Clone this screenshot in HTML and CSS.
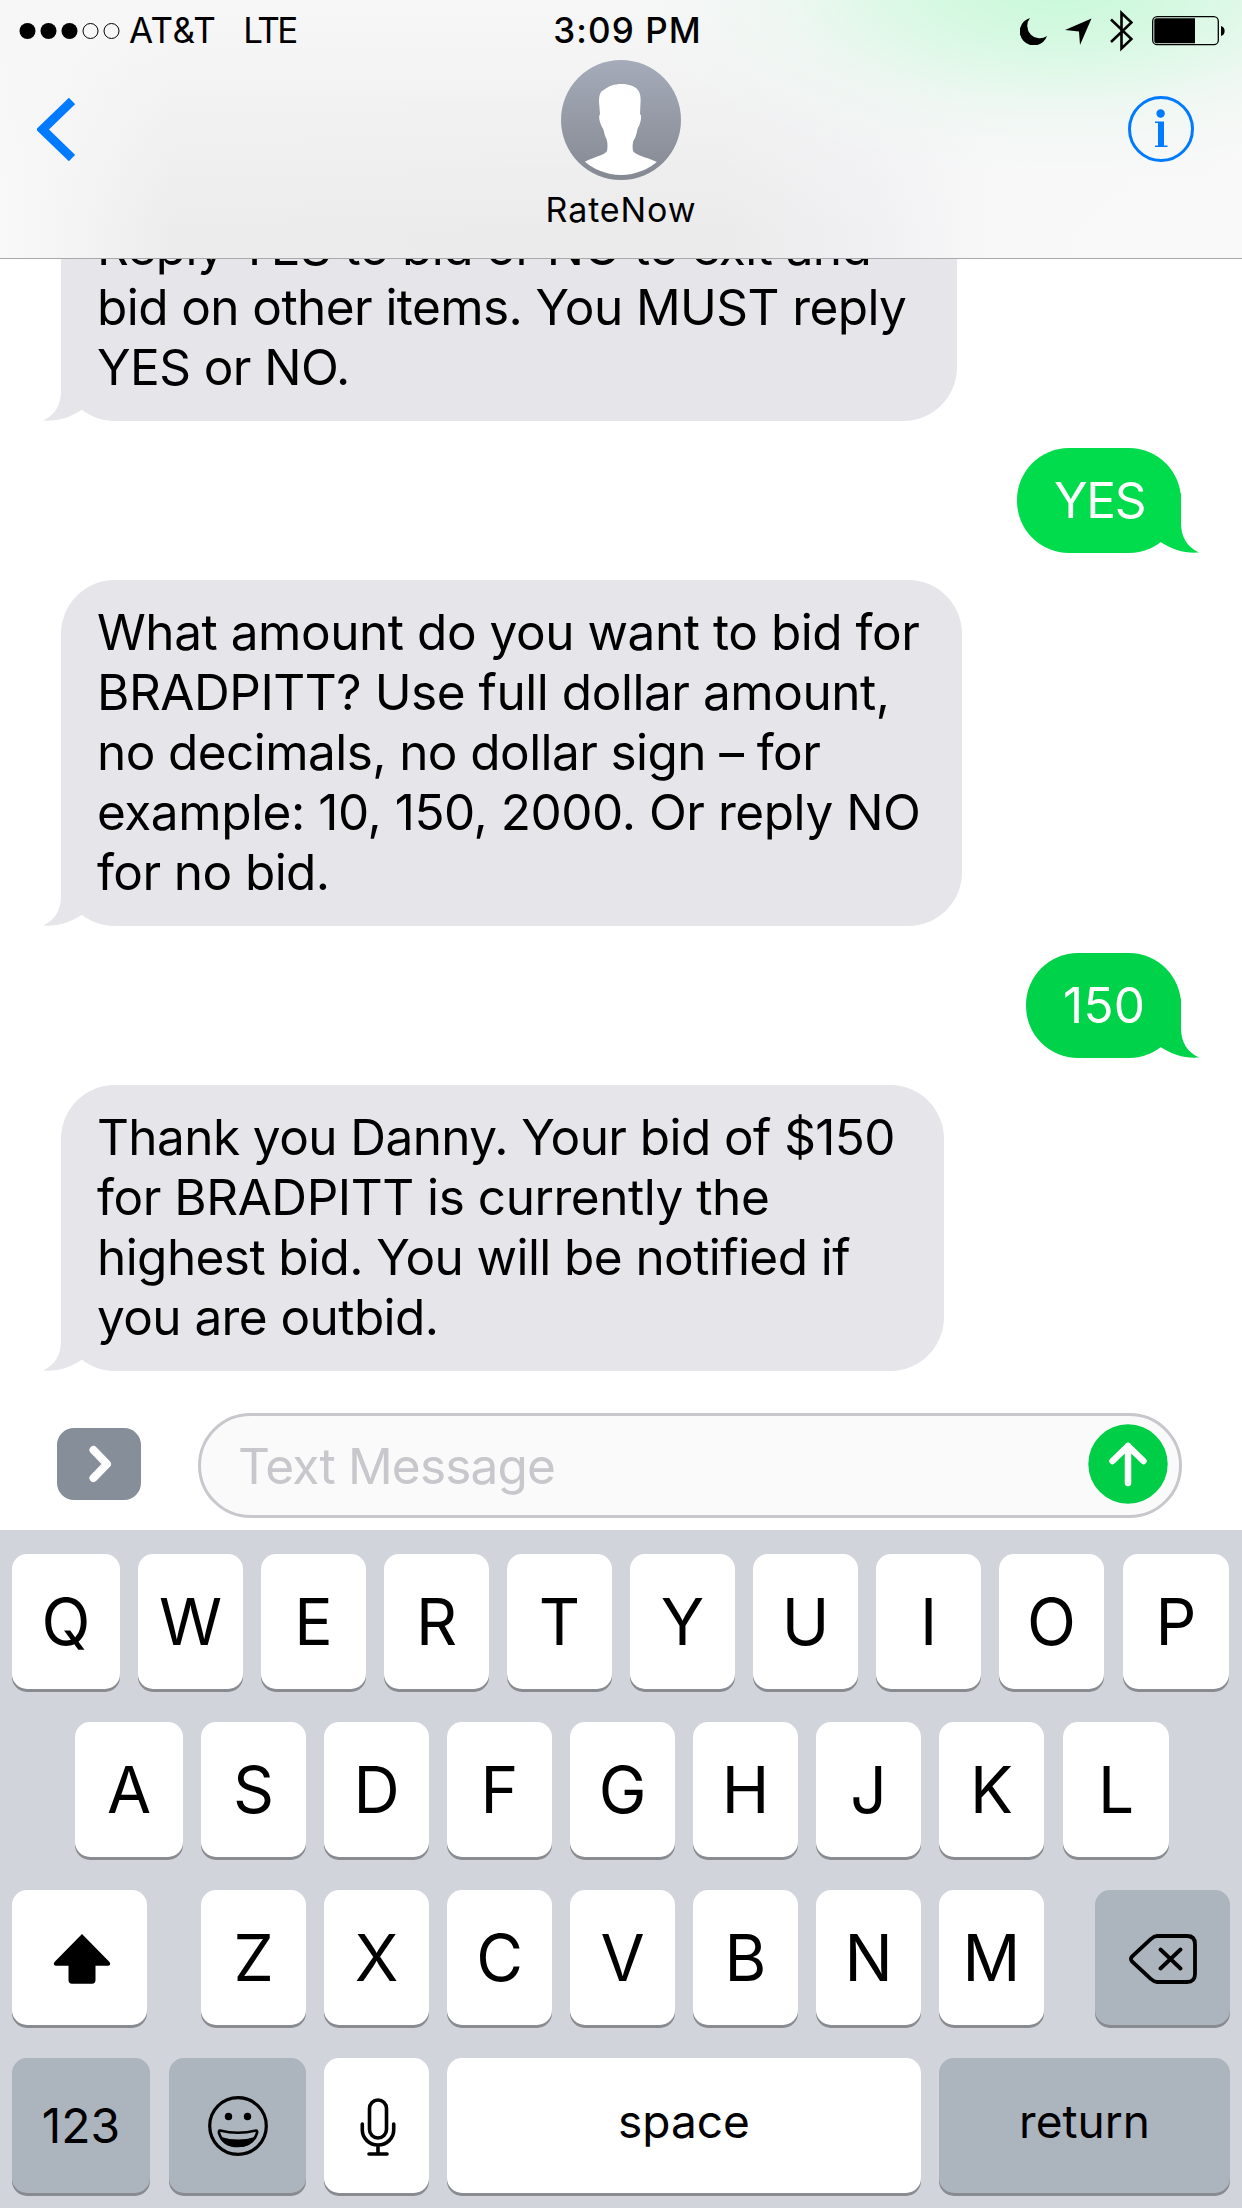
FILE: index.html
```html
<!DOCTYPE html>
<html lang="en">
<head>
<title>RateNow</title>
<meta charset="utf-8">
<meta name="viewport" content="width=device-width, initial-scale=1">
<link rel="stylesheet" href="styles.css">
</head>
<body>

<header>
  <div class="status">
    <div class="status-left">
      <svg class="signal" width="102" height="18" viewBox="0 0 102 18">
        <circle cx="8.5" cy="9" r="8"/><circle cx="29.5" cy="9" r="8"/><circle cx="50.5" cy="9" r="8"/>
        <circle class="empty" cx="71.5" cy="9" r="7.5"/><circle class="empty" cx="92.5" cy="9" r="7.5"/>
      </svg>
      <span class="carrier">AT&amp;T</span>
      <span class="network">LTE</span>
    </div>
    <div class="time">3:09 PM</div>
    <div class="status-right">
      <!-- do not disturb, location, bluetooth, battery -->
      <svg width="27" height="27" viewBox="0 0 27 27"><path d="M10 0A14 14 0 1 0 27 18A12.5 12.5 0 0 1 10 0Z"/></svg>
      <svg class="loc" width="27" height="27" viewBox="0 0 27 27"><path d="M26.500.5L15 27L14 13.500L0 12Z"/></svg>
      <svg class="bt" width="23" height="42" viewBox="0 0 23 42"><path d="M1 9.500L21.500 29L11.500 38.500V3L21.500 12.500L1 32" fill="none" stroke="#000" stroke-width="2.600"/></svg>
      <svg class="battery" width="74" height="30" viewBox="0 0 74 30">
        <rect x=".7" y=".7" width="65.600" height="28" rx="4.500" fill="none" stroke="#000" stroke-width="1.300"/>
        <path d="M5 2.300H43V27.200H5A2.500 2.500 0 0 1 2.300 24.500V5A2.500 2.500 0 0 1 5 2.300Z"/>
        <path d="M69 10A5 5.200 0 0 1 69 20Z"/>
      </svg>
    </div>
  </div>
  <nav>
    <svg class="back" width="38" height="63" viewBox="0 0 38 63"><path d="M35 3L5.500 31.500L35 60" fill="none" stroke="#007aff" stroke-width="9"/></svg>
    <div class="contact">
      <svg width="120" height="120" viewBox="0 0 120 120">
        <defs>
          <linearGradient id="gray" x1="0" y1="0" x2="0" y2="1">
            <stop offset="0" stop-color="#a5abb9"/>
            <stop offset="1" stop-color="#858992"/>
          </linearGradient>
          <clipPath id="round"><circle cx="60" cy="60" r="55"/></clipPath>
        </defs>
        <circle cx="60" cy="60" r="60" fill="url(#gray)"/>
        <path clip-path="url(#round)" fill="#fff" d="M60 24C67 24 72 26 75 28C79 31 80 36 79.500 43L79 54C81 55 80 62 77.500 67C76.500 67 76 74 74 78C72 80 71 86 72 91C75 96 90 98 100 104V120H20V104C30 97 43 96 46 91C47 86 46.500 81 45 78C43 74 43 69 41 67C39 63 37 57 39 54L38 42C38 36 39 31 43 30C47 26 54 24 60 24Z"/>
      </svg>
      <div class="name">RateNow</div>
    </div>
    <svg class="info" width="66" height="66" viewBox="0 0 66 66">
      <circle cx="33" cy="33" r="31.500" fill="none" stroke="#007aff" stroke-width="3"/>
      <circle cx="32.600" cy="17.500" r="4.200" fill="#007aff"/>
      <path d="M27 25.500H36V49.500H39.500V51H27V49.500H30V27H27Z" fill="#007aff"/>
    </svg>
  </nav>
</header>

<main>
  <div class="bubble in">Reply YES to bid or NO to exit and<br>bid on other items. You MUST reply<br>YES or NO.
    <svg class="tail" viewBox="0 0 42 60"><path d="M18 0V30C18 44 12 54 0 59.500C14 60.500 26 57 39 48.700L42 20Z"/></svg>
  </div>
  <div class="bubble out yes">YES
    <svg class="tail" viewBox="0 0 42 60"><path d="M18 0V30C18 44 12 54 0 59.500C14 60.500 26 57 39 48.700L42 20Z"/></svg>
  </div>
  <div class="bubble in ask"><span class="loose">What amount do you want to bid for</span><br><span class="loose">BRADPITT? Use full dollar amount,</span><br>no decimals, no dollar sign – for<br><span class="loose">example: 10, 150, 2000. Or reply NO</span><br>for no bid.
    <svg class="tail" viewBox="0 0 42 60"><path d="M18 0V30C18 44 12 54 0 59.500C14 60.500 26 57 39 48.700L42 20Z"/></svg>
  </div>
  <div class="bubble out bid">150
    <svg class="tail" viewBox="0 0 42 60"><path d="M18 0V30C18 44 12 54 0 59.500C14 60.500 26 57 39 48.700L42 20Z"/></svg>
  </div>
  <div class="bubble in thanks">Thank you Danny. Your bid of $150<br><span class="loose">for BRADPITT is currently the</span><br>highest bid. You will be notified if<br>you are outbid.
    <svg class="tail" viewBox="0 0 42 60"><path d="M18 0V30C18 44 12 54 0 59.500C14 60.500 26 57 39 48.700L42 20Z"/></svg>
  </div>
</main>

<div class="compose">
  <div class="apps">
    <svg width="84" height="72" viewBox="0 0 84 72"><path d="M36.500 22L50 36L36.500 50" fill="none" stroke="#fff" stroke-width="8" stroke-linecap="round" stroke-linejoin="round"/></svg>
  </div>
  <div class="field">
    <span>Text Message</span>
    <svg class="send" width="80" height="80" viewBox="0 0 80 80">
      <circle cx="40" cy="40" r="39.700" fill="#00ce46"/>
      <path d="M40 59V22M24.500 37L40 22L55.500 37" fill="none" stroke="#fff" stroke-width="6.500" stroke-linecap="round" stroke-linejoin="round"/>
    </svg>
  </div>
</div>

<div class="keyboard">
  <div class="row">
    <div class="key wide">Q</div><div class="key">W</div><div class="key">E</div><div class="key">R</div><div class="key">T</div><div class="key">Y</div><div class="key">U</div><div class="key">I</div><div class="key">O</div><div class="key last">P</div>
  </div>
  <div class="row middle">
    <div class="key wide">A</div><div class="key">S</div><div class="key">D</div><div class="key">F</div><div class="key">G</div><div class="key">H</div><div class="key">J</div><div class="key">K</div><div class="key last">L</div>
  </div>
  <div class="row">
    <div class="key shift">
      <svg width="58" height="50" viewBox="0 0 58 50"><path d="M29 0L56.500 28Q58.500 31.500 55 31.800H42.500V46Q42.500 49.700 39 49.700H19Q15.500 49.700 15.500 46V31.800H3Q-.5 31.500 1.500 28Z"/></svg>
    </div>
    <div class="key">Z</div><div class="key">X</div><div class="key">C</div><div class="key">V</div><div class="key">B</div><div class="key">N</div><div class="key">M</div>
    <div class="key gray delete">
      <svg width="68" height="50" viewBox="0 0 68 50"><path d="M28 2H58Q66 2 66 10V40Q66 48 58 48H28Q25 48 22 45L3 27.500Q1 25 3 22.500L22 5Q25 2 28 2ZM31.500 15.500L51.500 34.500M51.500 15.500L31.500 34.500" fill="none" stroke="#000" stroke-width="3.800" stroke-linecap="round"/></svg>
    </div>
  </div>
  <div class="row">
    <div class="key gray numbers">123</div>
    <div class="key gray emoji">
      <svg width="60" height="60" viewBox="0 0 60 60">
        <circle cx="30" cy="30" r="28.300" fill="none" stroke="#000" stroke-width="3.200"/>
        <ellipse cx="20.500" cy="20.500" rx="3.700" ry="3.800"/><ellipse cx="39.500" cy="20.500" rx="3.700" ry="3.800"/>
        <path d="M12 34.500Q30 39 48 34.500Q49.500 34.500 49 37Q45 50 30 50Q15 50 11 37Q10.500 34.500 12 34.500Z" fill="none" stroke="#000" stroke-width="2.600"/>
        <path d="M13 41Q30 46 47 41Q43 51 30 51Q17 51 13 41Z"/>
      </svg>
    </div>
    <div class="key mic">
      <svg width="36" height="58" viewBox="0 0 36 58"><path d="M9.500 10.500A8.500 8.500 0 0 1 26.500 10.500V31.500A8.500 8.500 0 0 1 9.500 31.500ZM2.300 26V32A15.700 15 0 0 0 33.700 32V26M18 47V55M9 56H27" fill="none" stroke="#000" stroke-width="3.600" stroke-linecap="round"/></svg>
    </div>
    <div class="key space">space</div>
    <div class="key gray return">return</div>
  </div>
</div>

</body>
</html>
```
FILE: styles.css
```css
* {
  box-sizing: border-box;
}

body {
  margin: 0;
  width: 1242px;
  height: 2208px;
  overflow: hidden;
  display: flex;
  flex-direction: column;
  background: #fff;
  color: #000;
  font-family: Inter, Arial, sans-serif;
}

svg {
  display: block;
  flex: none;
}

header {
  height: 259px;
  flex: none;
  border-bottom: 1px solid #a9a9ac;
  background:
    radial-gradient(ellipse 430px 190px at 1060px -15px, rgba(200,249,217,1) 0%, rgba(208,249,222,.85) 30%, rgba(230,248,236,.4) 68%, rgba(248,248,248,0) 100%),
    linear-gradient(180deg, rgba(247,247,248,1) 0%, rgba(247,247,248,.6) 35%, rgba(247,247,248,0) 90%),
    linear-gradient(90deg, #f9f9f9 0%, #f3f3f4 7%, #ececed 14%, #ebebec 58%, #f0f0f2 70%, #f8f8f9 80%, #f9f9f9 100%);
}

.status {
  height: 60px;
  display: grid;
  grid-template-columns: 1fr auto 1fr;
  align-items: center;
  padding: 2px 16px 0 19px;
  font-size: 35px;
  line-height: 60px;
}

.status-left,
.status-right {
  display: flex;
  align-items: center;
}

.status-right {
  justify-content: flex-end;
}

.signal {
  margin-right: 8px;
}

.signal .empty {
  fill: none;
  stroke: #000;
  stroke-width: 1;
}

.carrier {
  margin-top: -2px;
  letter-spacing: 0.4px;
}

.network {
  margin-top: -2px;
  margin-left: 27px;
  letter-spacing: -2.6px;
}

.time {
  margin-top: -2px;
  padding-left: 10px;
  font-weight: 500;
  letter-spacing: 1.1px;
}

.loc {
  margin-left: 18px;
}

.bt {
  margin-left: 18px;
}

.battery {
  margin-left: 19px;
}

nav {
  display: flex;
  justify-content: space-between;
  padding: 0 48px 0 37px;
}

.back {
  margin-top: 38px;
}

.info {
  margin-top: 36px;
}

.contact {
  width: 160px;
  margin-left: 39px;
  display: flex;
  flex-direction: column;
  align-items: center;
}

.name {
  margin-top: 9px;
  font-size: 34px;
  line-height: 42px;
  letter-spacing: 0.9px;
}

/* Messages */
main {
  height: 1112px;
  flex: none;
  overflow: hidden;
  display: flex;
  flex-direction: column;
  justify-content: flex-end;
  gap: 27px;
  padding: 0 61px;
}

.bubble {
  position: relative;
  flex: none;
  width: 896px;
  padding: 22px 0 23px 36px;
  border-radius: 54px;
  font-size: 49.5px;
  line-height: 60px;
  letter-spacing: -0.58px;
  white-space: nowrap;
}

.loose {
  letter-spacing: -0.45px;
}

.in {
  padding-bottom: 24px;
  background: #e5e5ea;
}

.out {
  align-self: flex-end;
  color: #fff;
  border-radius: 52px;
}

.yes {
  width: 164px;
  padding-left: 37px;
  background: #00dc4b;
  letter-spacing: -1.3px;
}

.bid {
  width: 155px;
  padding-left: 37px;
  background: #00d249;
  letter-spacing: 0.3px;
}

.ask {
  width: 901px;
}

.thanks {
  width: 883px;
}

.tail {
  position: absolute;
  left: -18px;
  bottom: 0;
  width: 42px;
  height: 60px;
  fill: #e5e5ea;
}

.out .tail {
  left: auto;
  right: -18px;
  transform: scaleX(-1);
}

.yes .tail {
  fill: #00dc4b;
}

.bid .tail {
  fill: #00d249;
}

/* Compose bar */
.compose {
  height: 159px;
  flex: none;
  display: flex;
  align-items: center;
  justify-content: space-between;
  padding: 42px 60px 12px 57px;
}

.apps {
  width: 84px;
  height: 72px;
  margin-bottom: 3px;
  border-radius: 17px;
  background: #868e99;
}

.field {
  width: 984px;
  height: 105px;
  display: flex;
  align-items: center;
  justify-content: space-between;
  padding: 0 11px 0 37px;
  border: 3px solid #c7c7cc;
  border-radius: 53px;
  background: #fafafa;
  color: #c7c7cc;
  font-size: 49.5px;
  letter-spacing: -0.8px;
}

.send {
  margin-bottom: 3px;
}

/* Keyboard */
.keyboard {
  height: 678px;
  flex: none;
  display: flex;
  flex-direction: column;
  gap: 33px;
  padding: 24px 12px 0;
  background: #d1d4db;
}

.row {
  display: flex;
  gap: 18px;
}

.middle {
  padding-left: 63px;
}

.key {
  width: 105px;
  height: 135px;
  flex: none;
  display: flex;
  align-items: center;
  justify-content: center;
  border-radius: 15px;
  background: #fff;
  box-shadow: 0 3px 0 #888b8f;
  font-size: 64px;
}

.wide {
  width: 108px;
}

.last {
  width: 106px;
  margin-left: 1px;
}

.gray {
  background: #acb4be;
}

.shift {
  width: 135px;
  margin-right: 36px;
  padding: 3px 0 0 4px;
}

.delete {
  width: 135px;
  margin-left: 33px;
  padding-top: 3px;
}

.numbers {
  width: 138px;
  font-size: 48px;
}

.emoji {
  width: 137px;
  margin-left: 1px;
}

.mic {
  padding: 3px 0 0 2px;
}

.space {
  width: 474px;
  padding-bottom: 9px;
  font-size: 46px;
}

.return {
  width: 291px;
  padding-bottom: 9px;
  font-size: 46px;
}
```
